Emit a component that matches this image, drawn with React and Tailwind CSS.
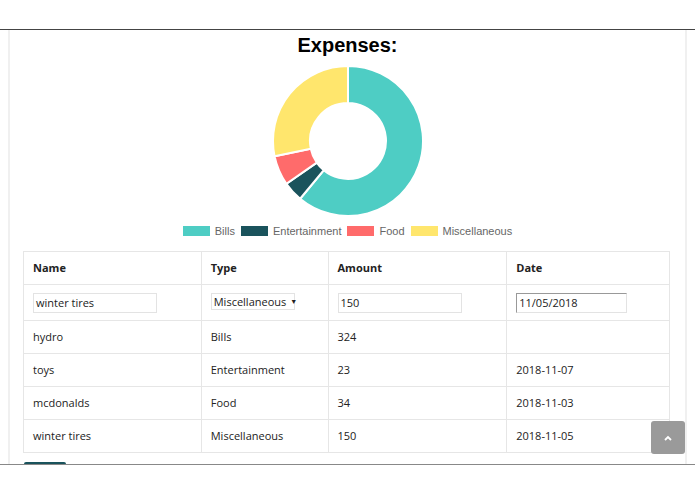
import React from "react";

const data = [
  { label: "Bills", value: 324, color: "#4ecdc4" },
  { label: "Entertainment", value: 23, color: "#1a535c" },
  { label: "Food", value: 34, color: "#ff6b6b" },
  { label: "Miscellaneous", value: 150, color: "#ffe66d" },
];

const rows = [
  { name: "hydro", type: "Bills", amount: "324", date: "" },
  { name: "toys", type: "Entertainment", amount: "23", date: "2018-11-07" },
  { name: "mcdonalds", type: "Food", amount: "34", date: "2018-11-03" },
  { name: "winter tires", type: "Miscellaneous", amount: "150", date: "2018-11-05" },
];

function arc(cx, cy, R, r, a0, a1) {
  const p = (rad, a) => [cx + rad * Math.cos(a), cy + rad * Math.sin(a)];
  const large = a1 - a0 > Math.PI ? 1 : 0;
  const [x0, y0] = p(R, a0);
  const [x1, y1] = p(R, a1);
  const [x2, y2] = p(r, a1);
  const [x3, y3] = p(r, a0);
  return `M${x0} ${y0} A${R} ${R} 0 ${large} 1 ${x1} ${y1} L${x2} ${y2} A${r} ${r} 0 ${large} 0 ${x3} ${y3} Z`;
}

const Donut = () => {
  const total = data.reduce((s, d) => s + d.value, 0);
  let a = -Math.PI / 2;
  return (
    <svg width="152" height="152" viewBox="-1 -1 152 152">
      {data.map((d) => {
        const a0 = a;
        a += (d.value / total) * Math.PI * 2;
        return (
          <path key={d.label} d={arc(75, 75, 75, 38, a0, a)} fill={d.color} stroke="#fff" strokeWidth="2" />
        );
      })}
    </svg>
  );
};

const cell = "border border-[#e6e6e6] px-[9px] text-left align-middle";

export default function App() {
  return (
    <div className="w-[695px] h-[494px] bg-white overflow-hidden" style={{ fontFamily: "'Open Sans', sans-serif" }}>
      <div className="h-[30px] border-b border-[#444]" />
      <div className="relative h-[434px] overflow-hidden">
        <div className="mx-[8px] h-full border-x-2 border-[#f0f0f0] px-[13px]">
          <h1 className="text-center text-[20px] font-bold leading-[30px] text-black" style={{ fontFamily: "'Liberation Sans', Arial, sans-serif" }}>
            Expenses:
          </h1>
          <div className="flex justify-center mt-[5px]">
            <Donut />
          </div>
          <div className="flex justify-center items-center gap-[6px] mt-[7px] text-[11px] leading-[14px] text-[#666]" style={{ fontFamily: "'Liberation Sans', Arial, sans-serif" }}>
            {data.map((d) => (
              <div key={d.label} className="flex items-center gap-[5px]">
                <span className="inline-block w-[27px] h-[10px]" style={{ background: d.color }} />
                <span>{d.label}</span>
              </div>
            ))}
          </div>
          <table className="mt-[13px] w-[647px] border-collapse text-[11px] text-[#222]">
            <colgroup>
              <col className="w-[178px]" />
              <col className="w-[127px]" />
              <col className="w-[179px]" />
              <col className="w-[163px]" />
            </colgroup>
            <thead>
              <tr className="h-[33px]">
                <th className={`${cell} font-bold`}>Name</th>
                <th className={`${cell} font-bold`}>Type</th>
                <th className={`${cell} font-bold`}>Amount</th>
                <th className={`${cell} font-bold`}>Date</th>
              </tr>
            </thead>
            <tbody>
              <tr className="h-[36px]">
                <td className={cell}>
                  <div className="w-[124px] h-[20px] border border-[#e3e3e3] px-[2px] leading-[18px]">winter tires</div>
                </td>
                <td className={cell}>
                  <div className="inline-flex items-center w-[84px] h-[17px] border border-[#e3e3e3] px-[2px] leading-[15px] mb-[3px]">
                    Miscellaneous<span className="ml-[4px] text-[7px]">▼</span>
                  </div>
                </td>
                <td className={cell}>
                  <div className="w-[124px] h-[20px] border border-[#e3e3e3] px-[2px] leading-[18px]">150</div>
                </td>
                <td className={cell}>
                  <div className="w-[111px] h-[20px] border border-[#e3e3e3] border-t-[#999] border-l-[#999] px-[2px] leading-[18px]">11/05/2018</div>
                </td>
              </tr>
              {rows.map((r, i) => (
                <tr key={i} className="h-[33px]">
                  <td className={cell}>{r.name}</td>
                  <td className={cell}>{r.type}</td>
                  <td className={cell}>{r.amount}</td>
                  <td className={cell}>{r.date}</td>
                </tr>
              ))}
            </tbody>
          </table>
          <div className="mt-[9px] ml-[1px] w-[42px] h-[20px] bg-[#1a535c] rounded-t-[2px]" />
        </div>
        <div className="absolute left-[651px] top-[391px] w-[34px] h-[33px] rounded-[3px] bg-[#9a9a9a] flex items-center justify-center">
          <svg width="8" height="6" viewBox="0 0 8 6">
            <path d="M1 5 L4 2 L7 5" stroke="#fff" strokeWidth="1.8" fill="none" />
          </svg>
        </div>
      </div>
      <div className="border-t border-[#888]" />
    </div>
  );
}
